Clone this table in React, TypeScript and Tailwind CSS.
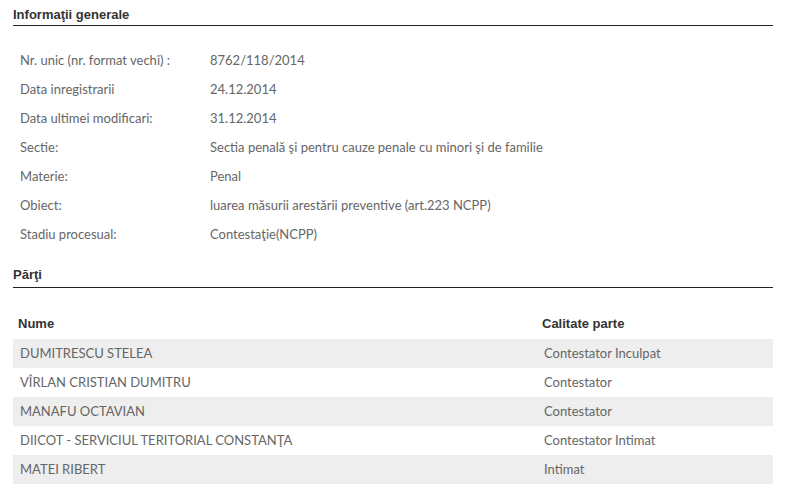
const info: [string, string][] = [
  ["Nr. unic (nr. format vechi) :", "8762/118/2014"],
  ["Data inregistrarii", "24.12.2014"],
  ["Data ultimei modificari:", "31.12.2014"],
  ["Sectie:", "Sectia penală şi pentru cauze penale cu minori şi de familie"],
  ["Materie:", "Penal"],
  ["Obiect:", "luarea măsurii arestării preventive (art.223 NCPP)"],
  ["Stadiu procesual:", "Contestaţie(NCPP)"],
];

const parti: [string, string][] = [
  ["DUMITRESCU STELEA", "Contestator Inculpat"],
  ["VÎRLAN CRISTIAN DUMITRU", "Contestator"],
  ["MANAFU OCTAVIAN", "Contestator"],
  ["DIICOT - SERVICIUL TERITORIAL CONSTANŢA", "Contestator Intimat"],
  ["MATEI RIBERT", "Intimat"],
];

const body = "font-['Lato',sans-serif] text-[13px] text-[#666]";
const head = "font-['Liberation_Sans',Arial,sans-serif] font-bold text-[13px] text-[#333]";

export default function App() {
  return (
    <div className="w-[811px] h-[502px] bg-white pl-[13px] pr-[38px] pt-[6px]">
      {/* Informatii generale */}
      <h2 className={`${head} h-[20px] pt-[1px] leading-[16px] border-b border-[#222]`}>Informaţii generale</h2>

      <div className={`${body} mt-[20px] flex flex-col`}>
        {info.map(([k, v]) => (
          <div key={k} className="flex h-[29px] items-center pl-[7px]">
            <div className="w-[190px]">{k}</div>
            <div>{v}</div>
          </div>
        ))}
      </div>

      {/* Parti */}
      <h2 className={`${head} mt-[16px] h-[23px] pt-[2px] leading-[16px] border-b border-[#222]`}>Părţi</h2>

      <div className="mt-[21px]">
        <div className={`${head} flex h-[30px] items-center`}>
          <div className="w-[524px] pl-[5px]">Nume</div>
          <div className="pl-[5px]">Calitate parte</div>
        </div>
        {parti.map(([n, c], i) => (
          <div key={n} className={`${body} flex h-[29px] items-center ${i % 2 === 0 ? "bg-[#eeeeee]" : ""}`}>
            <div className="w-[524px] pl-[7px]">{n}</div>
            <div className="pl-[7px]">{c}</div>
          </div>
        ))}
      </div>
    </div>
  );
}
